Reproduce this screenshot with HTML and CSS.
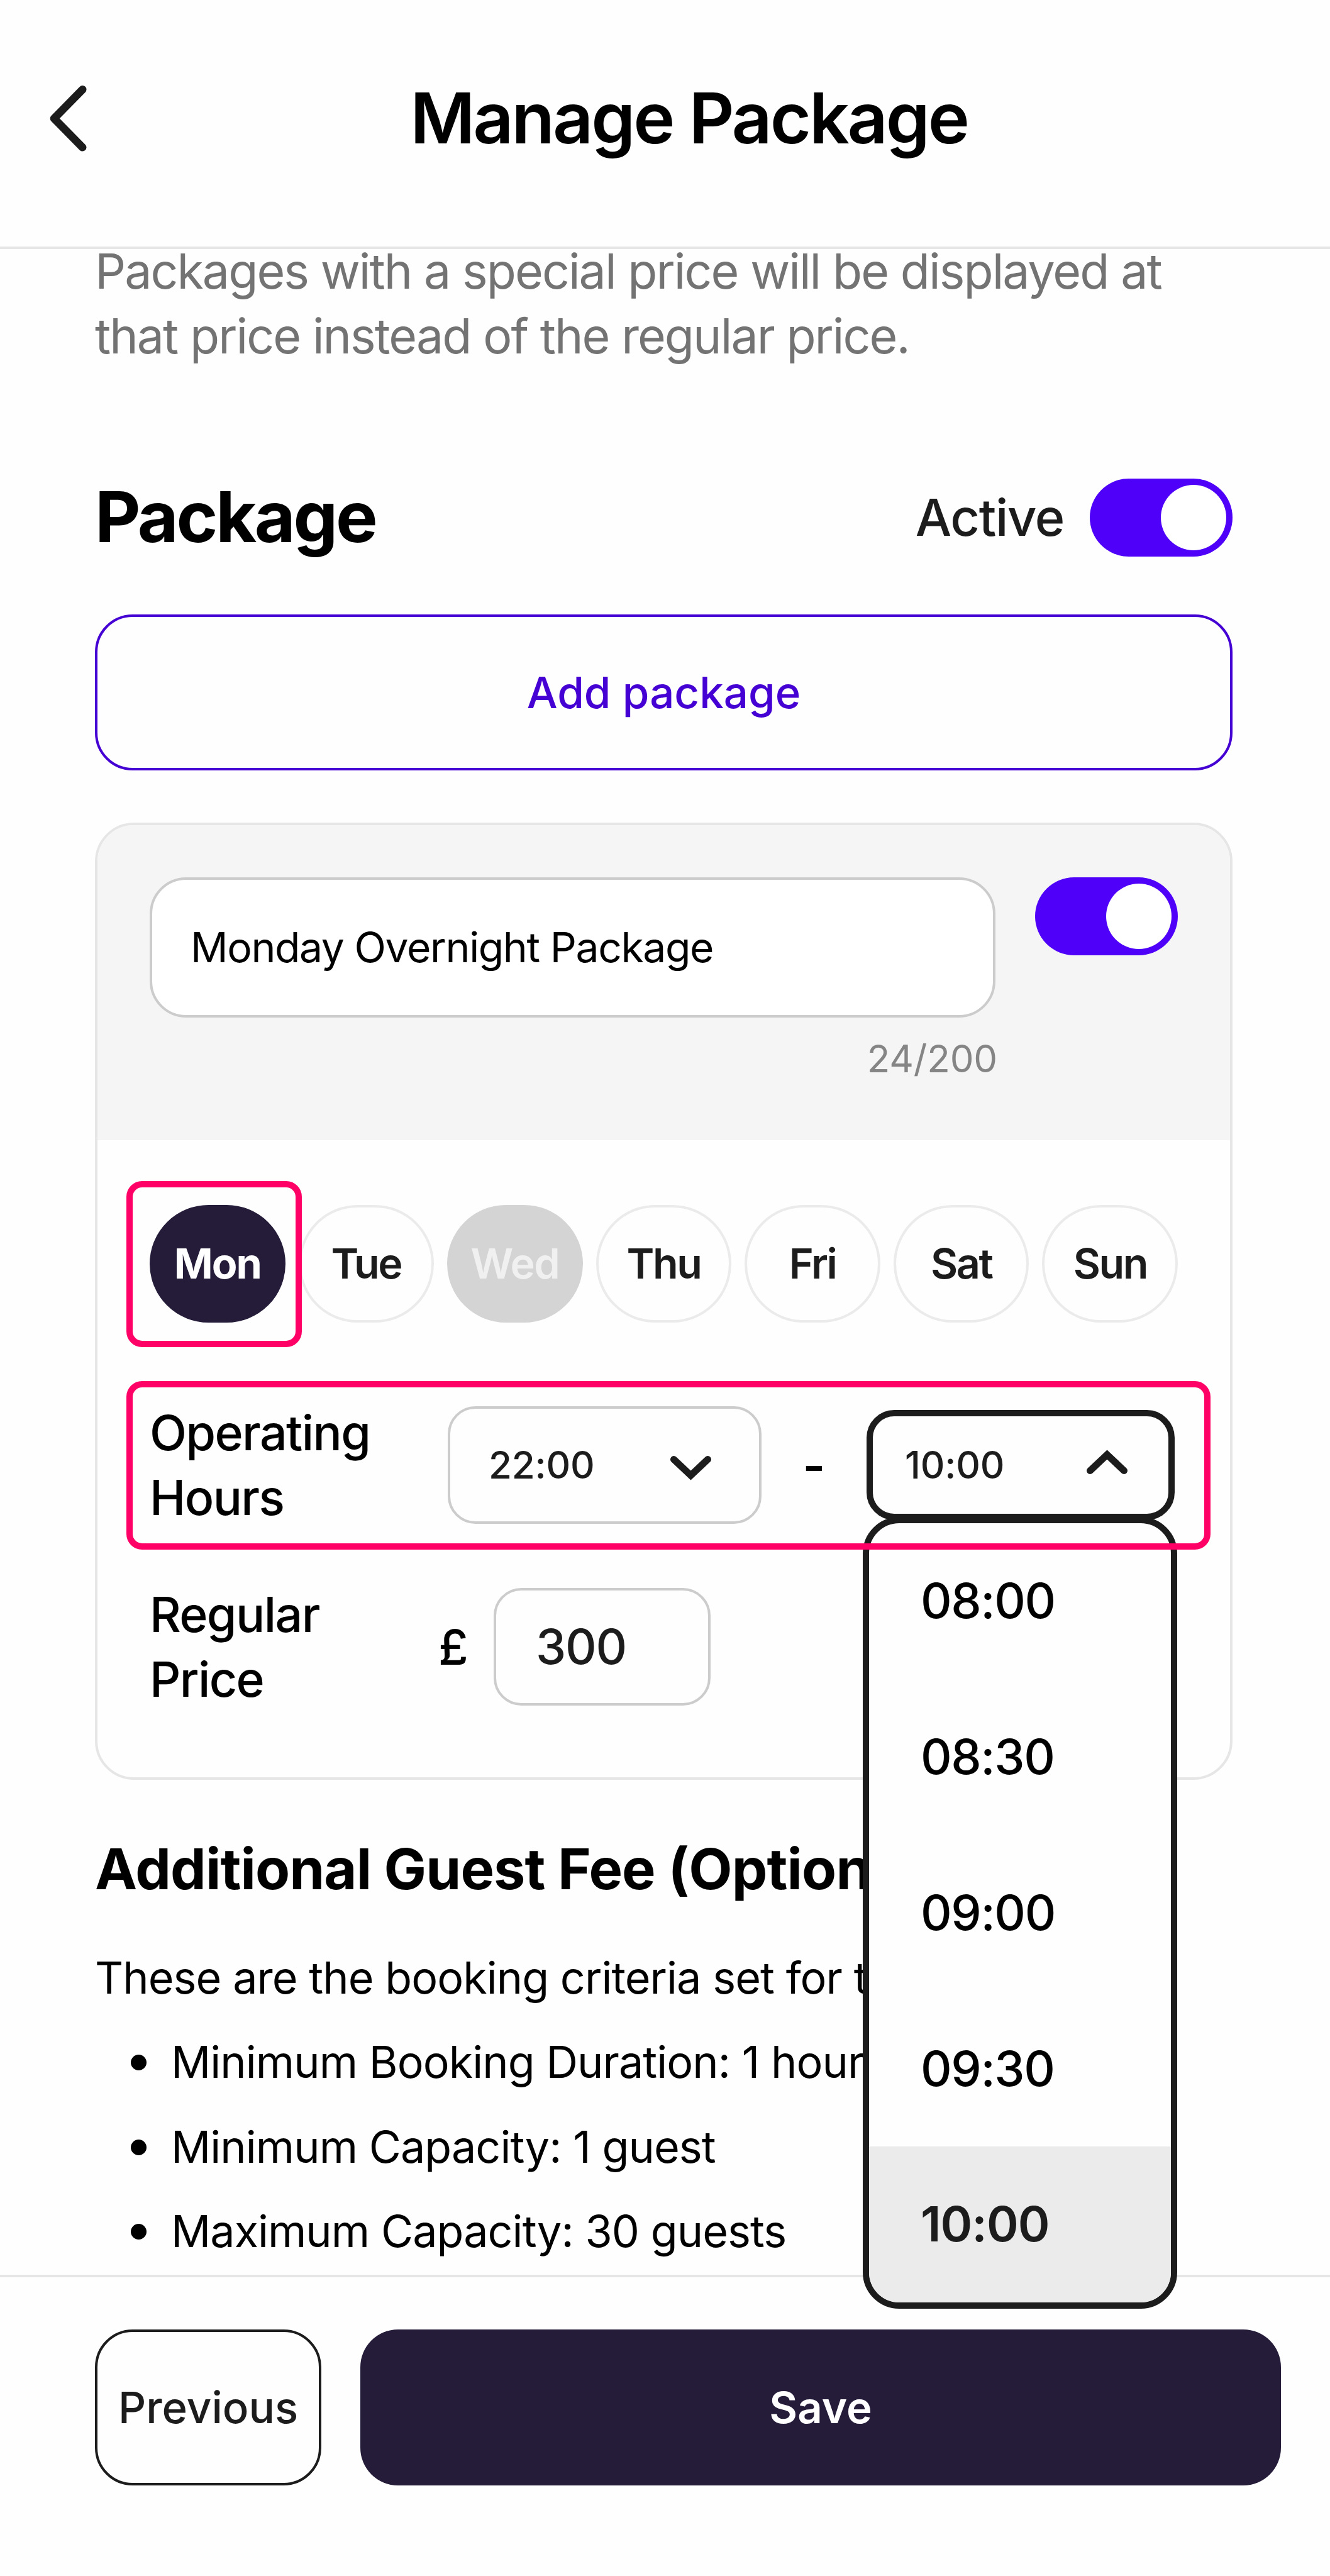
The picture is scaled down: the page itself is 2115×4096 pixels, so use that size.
FILE: index.html
```html
<!DOCTYPE html>
<html lang="en">

	<head>
		<meta charset="UTF-8">
		<meta name="viewport" content="width=device-width, initial-scale=1">

		<title>Manage Package</title>

		<!-- core CSS -->
		<link rel="stylesheet" href="styles.css">
	</head>

	<body>
		<div class="page-wrapper">
			<header class="header">
				<a class="back">
					<svg width="62" height="108" viewBox="0 0 62 108"><path d="M55.2 9.3 L10 55.3 L55.2 101.3" /></svg>
				</a>
				<h1>Manage Package</h1>
			</header>

			<div class="content">
				<p class="intro">Packages with a special price will be displayed at<br>that price instead of the regular price.</p>

				<div class="section_title">
					<h2>Package</h2>
					<span class="active_label">Active</span>
					<span class="toggle"></span>
				</div>

				<button class="btn add">Add package</button>

				<div class="card">
					<div class="card_head">
						<div class="name">
							<div class="input">Monday Overnight Package</div>
							<span class="counter">24/200</span>
						</div>
						<span class="toggle"></span>
					</div>

					<div class="card_body">
						<div class="days">
							<div class="day selected">Mon<span class="highlight"></span></div>
							<div class="day">Tue</div>
							<div class="day disabled">Wed</div>
							<div class="day">Thu</div>
							<div class="day">Fri</div>
							<div class="day">Sat</div>
							<div class="day">Sun</div>
						</div>

						<div class="row hours">
							<div class="label">Operating<br>Hours</div>
							<div class="select">
								<span>22:00</span>
								<svg width="65" height="39" viewBox="0 0 65 39"><path d="M5.5 5.5 L32.5 31 L59.5 5.5" /></svg>
							</div>
							<span class="dash">-</span>
							<div class="select_wrapper">
								<div class="select open">
									<span>10:00</span>
									<svg width="65" height="39" viewBox="0 0 65 39"><path d="M5.5 33.5 L32.5 8 L59.5 33.5" /></svg>
								</div>
								<ul class="dropdown">
									<li>08:00</li>
									<li>08:30</li>
									<li>09:00</li>
									<li>09:30</li>
									<li class="current">10:00</li>
								</ul>
							</div>
							<span class="highlight"></span>
						</div>

						<div class="row price">
							<div class="label">Regular<br>Price</div>
							<span class="currency">£</span>
							<div class="amount">300</div>
						</div>
					</div>
				</div><!-- /end card -->

				<h3>Additional Guest Fee (Optional)</h3>
				<p class="criteria_intro">These are the booking criteria set for this space</p>
				<ul class="criteria">
					<li>Minimum Booking Duration: 1 hour</li>
					<li>Minimum Capacity: 1 guest</li>
					<li>Maximum Capacity: 30 guests</li>
				</ul>
			</div><!-- /end content -->

			<footer class="footer">
				<button class="btn previous">Previous</button>
				<button class="btn save">Save</button>
			</footer>
		</div>
	</body>
</html>
```
FILE: styles.css
```css
* { box-sizing: border-box; }
body, html { margin: 0; padding: 0; }
body { font-family: Inter, sans-serif; color: #000; background: #fefefe; font-optical-sizing: none; }
h1, h2, h3, p, ul { margin: 0; padding: 0; }
ul { list-style: none; }
svg { display: block; flex: none; }
svg path { fill: none; stroke: #1c1c1c; stroke-width: 11; stroke-linecap: round; }
.page-wrapper { width: 2115px; height: 4096px; overflow: hidden; }

/* Header */
.header { display: flex; align-items: center; height: 396px; padding: 0 76px 18px; border-bottom: 4px solid #e6e6e6; }
.back { width: 76px; }
.back path { stroke-width: 12.6; stroke-linejoin: round; }
.header h1 { flex: 1; font-size: 112px; font-weight: 600; letter-spacing: -3.1px; text-align: center; }

/* Content */
.content { height: 3221px; padding: 0 155px 0 151px; margin-top: -16px; margin-bottom: 16px; white-space: nowrap; }
.intro { font-size: 77px; line-height: 102.7px; letter-spacing: -1.95px; color: #737373; }
.section_title { display: flex; align-items: center; height: 124px; margin-top: 176px; }
.section_title h2 { flex: 1; margin-top: -4px; font-size: 112px; font-weight: 700; letter-spacing: -3.3px; }
.active_label { margin-right: 41px; font-size: 81px; font-weight: 500; letter-spacing: -1.3px; color: #1c1c1c; }
.toggle { display: flex; flex: none; justify-content: flex-end; width: 227px; height: 124px; padding: 10px; border-radius: 62px; background: #4f00f8; }
.toggle:after { width: 104px; height: 104px; border-radius: 50%; background: #fff; content: ""; }

.btn { height: 248px; padding: 0; font-family: inherit; font-size: 69px; font-weight: 500; border-radius: 60px; }
.btn.add { display: block; width: 100%; margin-top: 92px; color: #4500d3; border: 4px solid #4500d3; background: none; }

/* Package card */
.card { margin-top: 83px; border: 4px solid #e6e6e6; border-radius: 62px; }
.card_head { display: flex; justify-content: space-between; height: 501px; padding: 83px 83px 0; border-radius: 58px 58px 0 0; background: #f5f5f5; }
.name { width: 1345px; }
.input { height: 223px; padding-left: 61px; font-size: 66px; line-height: 215px; letter-spacing: -1.4px; border: 4px solid #ccc; border-radius: 58px; background: #fff; }
.counter { display: block; margin-top: 29px; margin-right: -3px; font-size: 60px; line-height: 72px; letter-spacing: -.2px; color: #858585; text-align: right; }
.card_body { padding: 103px 83px 105px; }

.days { display: flex; gap: 21px; }
.day { position: relative; flex: 1; height: 187px; font-size: 66.5px; font-weight: 600; line-height: 179px; letter-spacing: -2.5px; text-align: center; color: #1c1c1c; border: 4px solid #ebebeb; border-radius: 94px; }
.day.selected { font-weight: 700; color: #fff; letter-spacing: -2px; border-color: #251c3a; background: #251c3a; }
.day.disabled { color: #f0f0f0; letter-spacing: -1.5px; border-color: #d4d4d4; background: #d4d4d4; }

.highlight { position: absolute; z-index: 2; border: 10px solid #ff0066; border-radius: 25px; }
.day .highlight { top: -42px; right: -30px; bottom: -43px; left: -41px; }
.hours .highlight { top: -31px; right: -52px; bottom: -32px; left: -37px; }

.row { position: relative; display: flex; align-items: center; height: 205.4px; }
.row.hours { margin-top: 123.6px; }
.row.price { margin-top: 83.7px; }
.label { font-size: 77px; font-weight: 500; line-height: 102.7px; letter-spacing: -1.6px; }
.hours .label { width: 474px; }
.price .label { width: 459px; }
.select { display: flex; align-items: center; justify-content: space-between; width: 499px; height: 187px; padding: 0 76px 0 61px; font-size: 60px; font-weight: 500; letter-spacing: -.2px; color: #1c1c1c; border: 4px solid #ccc; border-radius: 44px; }
.select span { margin-top: -2px; }
.select svg { margin-top: 10px; }
.dash { width: 167px; font-size: 77px; font-weight: 600; text-align: center; }
.select_wrapper { position: relative; }
.select.open { width: 490px; height: 175px; padding: 0 65px 0 51px; border: 10px solid #1c1c1c; }
.select.open svg { margin-top: 0; margin-bottom: 10px; }
.dropdown { position: absolute; z-index: 1; top: 170px; left: -6px; width: 500px; font-size: 77px; font-weight: 500; letter-spacing: -1.4px; border: 10px solid #1c1c1c; border-radius: 58px; background: #fefefe; overflow: hidden; }
.dropdown li { height: 247.8px; padding-left: 82px; line-height: 247.8px; }
.dropdown .current { font-weight: 600; letter-spacing: -1px; color: #1c1c1c; background: #ebebeb; }

.currency { width: 88px; font-size: 77px; font-weight: 500; }
.amount { width: 345px; height: 187px; padding-left: 63px; font-size: 77px; font-weight: 500; line-height: 179px; letter-spacing: -1.3px; color: #1c1c1c; border: 4px solid #ccc; border-radius: 44px; }

/* Guest fee */
h3 { margin-top: 82px; font-size: 90px; font-weight: 700; line-height: 120px; letter-spacing: -.9px; }
.criteria_intro { margin-top: 61px; font-size: 70px; line-height: 104px; letter-spacing: -.95px; }
.criteria { margin-top: 15px; font-size: 70px; line-height: 134.4px; letter-spacing: -.93px; }
.criteria li { display: flex; align-items: center; gap: 39px; padding-left: 57px; }
.criteria li:before { width: 25px; height: 25px; border-radius: 50%; background: #000; content: ""; }

/* Footer */
.footer { display: flex; gap: 62px; height: 479px; padding: 83px 78px 0 151px; border-top: 4px solid #e6e6e6; }
.btn.previous { width: 360px; color: #1c1c1c; border: 4px solid #1c1c1c; background: none; }
.btn.save { flex: 1; font-weight: 600; color: #fff; border: none; background: #251c3a; }
```
